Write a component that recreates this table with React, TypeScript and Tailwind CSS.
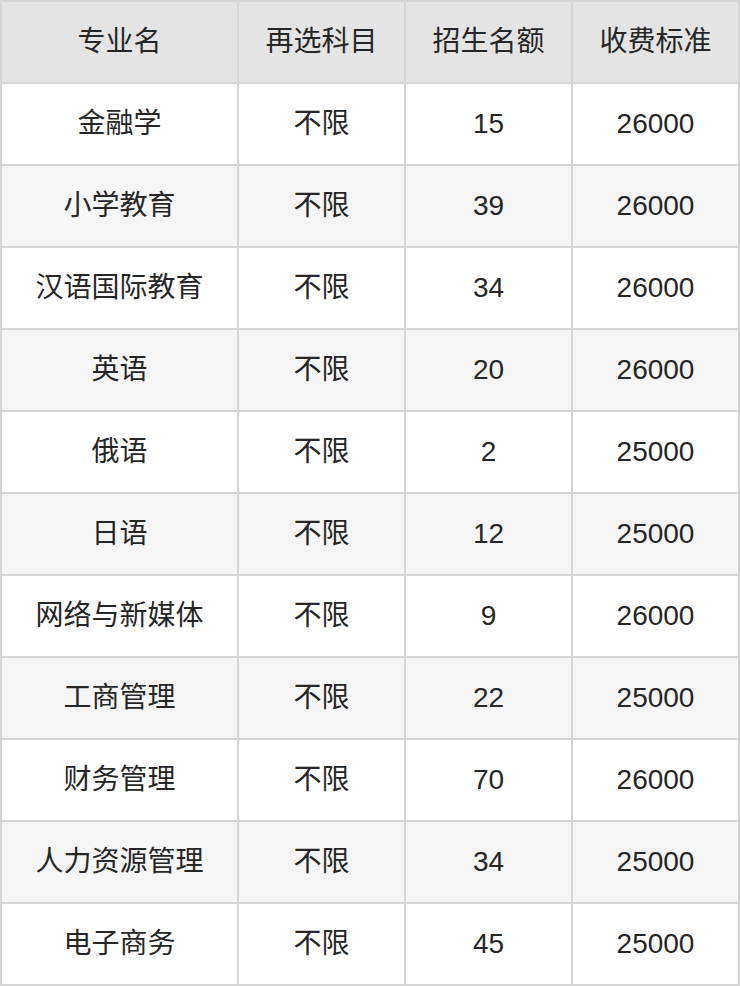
import React from "react";

const header = ["专业名", "再选科目", "招生名额", "收费标准"];
const rows: string[][] = [
  ["金融学", "不限", "15", "26000"],
  ["小学教育", "不限", "39", "26000"],
  ["汉语国际教育", "不限", "34", "26000"],
  ["英语", "不限", "20", "26000"],
  ["俄语", "不限", "2", "25000"],
  ["日语", "不限", "12", "25000"],
  ["网络与新媒体", "不限", "9", "26000"],
  ["工商管理", "不限", "22", "25000"],
  ["财务管理", "不限", "70", "26000"],
  ["人力资源管理", "不限", "34", "25000"],
  ["电子商务", "不限", "45", "25000"],
];

export default function App() {
  return (
    <div
      className="w-[740px] h-[986px] bg-white"
      style={{ fontFamily: '"Liberation Sans", "Noto Sans CJK SC", sans-serif' }}
    >
      <div className="grid grid-cols-[235px_165px_165px_165px] auto-rows-[80px] gap-[2px] p-[2px] bg-[#d5d5d5] text-[28px] text-[#262626]">
        {header.map((h) => (
          <div key={h} className="bg-[#e4e4e4] flex items-center justify-center">
            {h}
          </div>
        ))}
        {rows.map((r, i) =>
          r.map((c, j) => (
            <div
              key={i + "-" + j}
              className={
                "flex items-center justify-center " +
                (i % 2 === 0 ? "bg-white" : "bg-[#f5f5f5]")
              }
            >
              {c}
            </div>
          ))
        )}
      </div>
    </div>
  );
}
